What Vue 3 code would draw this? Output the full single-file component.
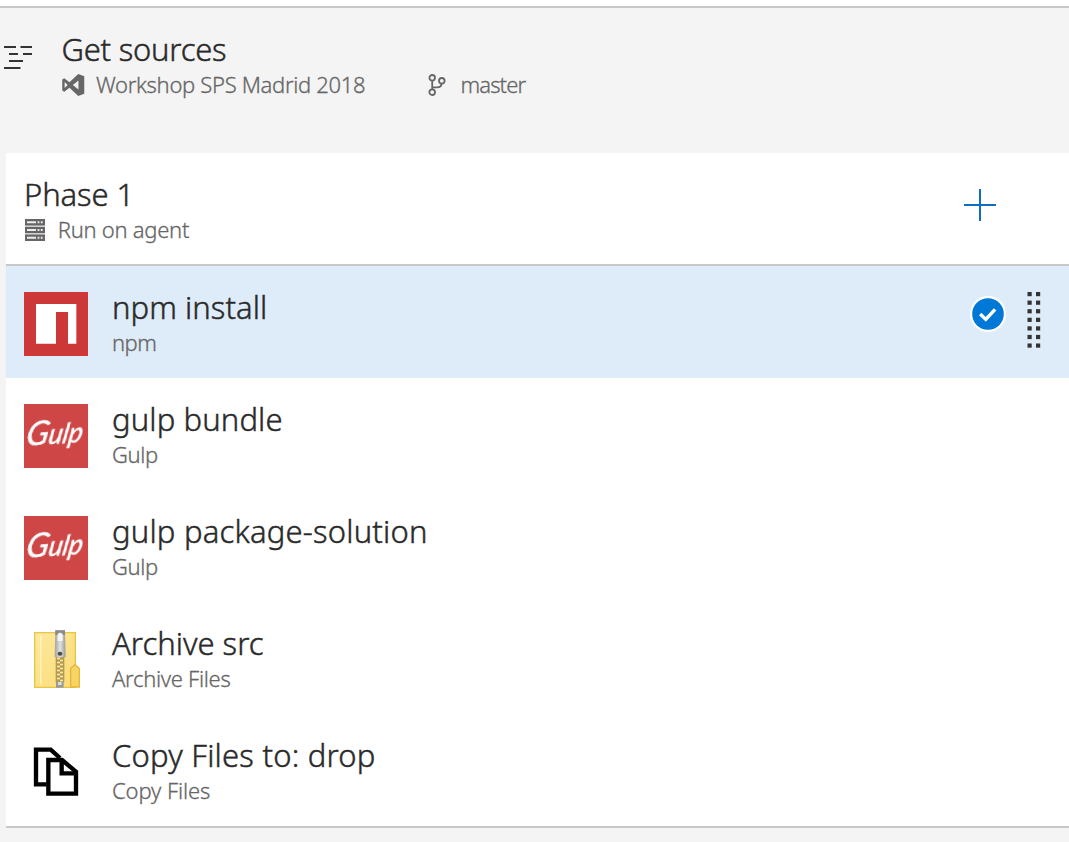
<script setup>
const steps = [
  { title: 'npm install', task: 'npm', icon: 'npm', fit: [0.05, -0.5], selected: true },
  { title: 'gulp bundle', task: 'Gulp', icon: 'gulp', fit: [0.12, -0.4] },
  { title: 'gulp package-solution', task: 'Gulp', icon: 'gulp', fit: [0.2, -0.4] },
  { title: 'Archive src', task: 'Archive Files', icon: 'archive', fit: [0, -0.3] },
  { title: 'Copy Files to: drop', task: 'Copy Files', icon: 'copy', fit: [0.22, -0.1] },
]
const gripRows = 7
const teeth = 12
</script>

<template>
  <div class="page">
    <header class="sources">
      <svg class="lines" viewBox="0 0 32 28">
        <path d="M4 5h12M20.5 5H32M9 12h9M23 12h9M9 19h14M4 26h16.5" />
      </svg>
      <div class="text">
        <div class="title get">Get sources</div>
        <div class="sub">
          <svg class="vs" viewBox="0 0 22 22">
            <path fill-rule="evenodd" d="M16 0l6 2.3v17.4L16 22 7.2 13.7 2 17.7 0 16.6V5.4l2-1.1 5.2 4L16 0zM16.2 6.6L10.6 11l5.6 4.4V6.6zM2.4 7.9v6.2L5.4 11l-3-3.1z" />
          </svg>
          <span class="repo">Workshop SPS Madrid 2018</span>
          <svg class="branch" viewBox="0 0 18 22">
            <circle cx="4.2" cy="3.8" r="2.8" /><circle cx="4.2" cy="18.2" r="2.8" /><circle cx="13.8" cy="6.8" r="2.8" />
            <path d="M4.2 6.6v8.8M4.2 13.4h5c2.6 0 4.3-1.4 4.3-3.8" />
          </svg>
          <span class="master">master</span>
        </div>
      </div>
    </header>

    <main class="panel">
      <section class="phase">
        <div class="text">
          <div class="title phase-name">Phase 1</div>
          <div class="sub">
            <svg class="server" viewBox="0 0 20 22">
              <g v-for="n in 3" :key="n" :transform="`translate(0 ${(n - 1) * 7.7})`">
                <path class="box" d="M0 0h20v6.6H0z" />
                <path class="slot" d="M2 2.3h9v2H2zM12.6 2.3h1.8v2h-1.8zM15.8 2.3h1.8v2h-1.8z" />
              </g>
            </svg>
            <span class="agent">Run on agent</span>
          </div>
        </div>
        <svg class="plus" viewBox="0 0 34 34"><path d="M1 17h32M17 1v32" /></svg>
      </section>

      <section v-for="s in steps" :key="s.title" class="step" :class="{ selected: s.selected }">
        <svg v-if="s.icon === 'npm'" class="icon" viewBox="42 36 192 192">
          <path fill="#cb3837" d="M42 36h192v192H42z" />
          <path class="soft" fill="#fff" d="M78 72h121v119h-25V96h-36v95H78z" />
        </svg>
        <svg v-else-if="s.icon === 'gulp'" class="icon" viewBox="42 27 192 192">
          <path fill="#cf4646" d="M42 27h192v192H42z" />
          <g class="soft wordmark" transform="translate(45 153) rotate(-4) skewX(-14)">
            <text textLength="170" lengthAdjust="spacingAndGlyphs"><tspan class="cap">G</tspan><tspan>ulp</tspan></text>
          </g>
        </svg>
        <svg v-else-if="s.icon === 'archive'" class="icon" viewBox="42 39 192 192">
          <defs>
            <linearGradient id="folder" x1="0" x2="1" y1="0" y2="1">
              <stop offset="0" stop-color="#ffe9a0" /><stop offset="1" stop-color="#fadb74" />
            </linearGradient>
            <linearGradient id="metal"><stop offset="0" stop-color="#a0a0a0" /><stop offset=".5" stop-color="#e2e2e2" /><stop offset="1" stop-color="#999" /></linearGradient>
          </defs>
          <g class="soft">
            <path fill="url(#folder)" stroke="#e8c545" stroke-width="4" d="M74 53h122v164H74z" />
            <path fill="none" stroke="#fff3bd" stroke-width="4" d="M92 62v146" />
            <path fill="#f7d565" stroke="#e3b935" stroke-width="4" d="M182 216v-56l13-11 13 11v56z" />
            <path fill="#b79a45" d="M137 126h26v76h-26z" />
            <path v-for="n in teeth" :key="n" fill="#f3e6b8" :d="`M${n % 2 ? 141 : 150} ${122 + n * 6}h9v5h-9z`" />
            <path fill="url(#metal)" d="M136 46h29l2 81h-33z" />
            <path fill="#8a8a8a" d="M136 46h29v14h-5l-5-7h-9l-5 7h-5z" />
            <path fill="#f4f4f4" d="M143 60l4-5h7l4 5v18h-15z" />
            <ellipse cx="150" cy="116" rx="7" ry="6" fill="#4d4d43" />
            <path fill="#999" d="M138 200h23v18h-23z" />
            <path fill="#ddd" d="M144 201h11v9h-11z" />
          </g>
        </svg>
        <svg v-else class="icon" viewBox="42 30 192 192">
          <g class="soft" fill="none" stroke="#000" stroke-width="13">
            <path d="M110 163H78V59h44l28 25" />
            <path fill="#fff" d="M115 90h41l42 35v66h-83z" />
            <path d="M155 90v40h43" />
          </g>
        </svg>
        <div class="text">
          <div class="title" :style="{ letterSpacing: s.fit[0] + 'px' }">{{ s.title }}</div>
          <div class="sub" :style="{ letterSpacing: s.fit[1] + 'px' }">{{ s.task }}</div>
        </div>
        <template v-if="s.selected">
          <svg class="check" viewBox="0 0 36 36">
            <circle cx="18" cy="18" r="18" fill="#fff" /><circle cx="18" cy="18" r="15.8" fill="#0078d7" />
            <path d="M10.2 18l5.6 5.4 9.3-10" />
          </svg>
          <svg class="grip" viewBox="0 0 14 58">
            <g v-for="n in gripRows" :key="n">
              <rect x=".5" :y="(n - 1) * 8.58" width="4.2" height="4.2" />
              <rect x="9" :y="(n - 1) * 8.58" width="4.2" height="4.2" />
            </g>
          </svg>
        </template>
      </section>
    </main>
  </div>
</template>

<style>
body { background: #f4f4f4; }
</style>

<style scoped>
.page {
  box-sizing: border-box;
  width: 1069px;
  height: 842px;
  overflow: hidden;
  border-top: 6px solid #fff;
  background: #f4f4f4;
  font-family: "Noto Sans", "Open Sans", sans-serif;
  font-weight: 300;
}
.sources { display: flex; box-sizing: border-box; height: 147px; border-top: 2px solid #c8c8c8; }
.lines { width: 32px; height: 28px; margin: 34px 29.5px 0 0; fill: none; stroke: #333; stroke-width: 2; }
.text { flex: 1; padding-top: 21px; white-space: nowrap; }
.title { font-size: 31px; line-height: 40px; color: #2a2a2a; -webkit-text-stroke: .45px #2a2a2a; }
.sub { display: flex; height: 30px; font-size: 22px; line-height: 30px; color: #666; -webkit-text-stroke: .3px #666; }
.get { letter-spacing: -.24px; }
.repo { width: 332.5px; letter-spacing: -.32px; }
.master { letter-spacing: -.9px; }
.vs { width: 22.5px; height: 22px; margin: 5px 11.5px 0 .5px; fill: #666; }
.branch { width: 18px; height: 22px; margin: 5px 15px 0 -1px; fill: none; stroke: #666; stroke-width: 1.8; }
.panel { margin-left: 6px; border-bottom: 2px solid #c8c8c8; background: #fff; }
.phase { display: flex; box-sizing: border-box; height: 113px; padding-left: 17px; border-bottom: 2px solid #c8c8c8; }
.phase-name { padding-left: 1px; letter-spacing: -.1px; }
.server { width: 20px; height: 22px; margin: 5px 12.5px 0 2.3px; }
.box { fill: #666; }
.slot { fill: #eee; }
.agent { letter-spacing: -.28px; }
.plus { width: 34px; height: 34px; margin: 35px 72px 0 0; fill: none; stroke: #106ebe; stroke-width: 2; }
.step { display: flex; height: 112px; padding-left: 18px; }
.selected { background: #deecf9; }
.icon { width: 64px; height: 64px; margin: 26px 24px 0 0; }
.soft { filter: blur(.4px); }
.wordmark { fill: #fff; stroke: #fff; stroke-width: 1.5; font: italic 400 84px "Lato", sans-serif; }
.cap { font-size: 104px; }
.check { width: 36px; height: 36px; margin: 30px 21.3px 0 0; }
.check path { fill: none; stroke: #fff; stroke-width: 3.4; }
.grip { width: 14px; height: 58px; margin: 26px 28px 0 0; fill: #333; }
</style>
